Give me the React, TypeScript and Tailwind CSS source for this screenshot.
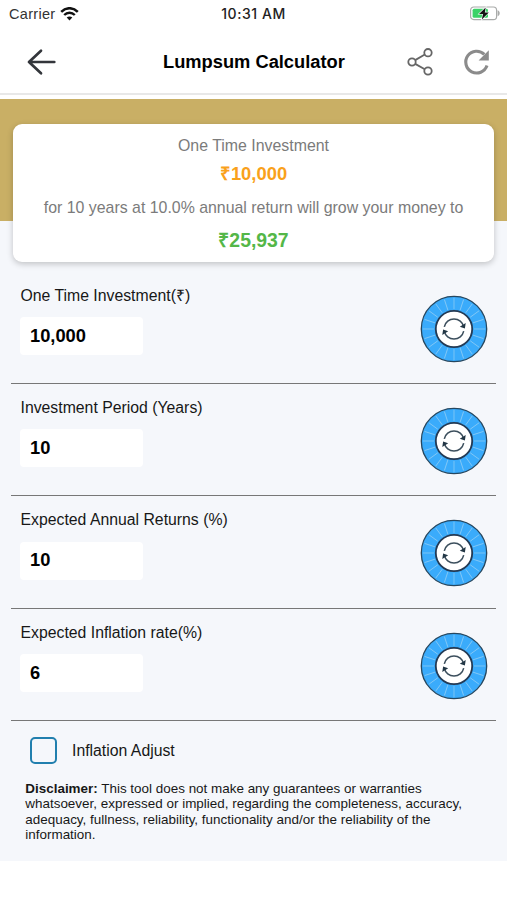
import React from "react";

const fields = [
  { label: "One Time Investment(₹)", value: "10,000" },
  { label: "Investment Period (Years)", value: "10" },
  { label: "Expected Annual Returns (%)", value: "10" },
  { label: "Expected Inflation rate(%)", value: "6" },
];

function WifiIcon() {
  return (
    <svg className="ml-[5px] h-[15px] w-[19px]" viewBox="0 0 19 15" fill="none" stroke="#111">
      <path d="M1.2 4.8C6 0 13 0 17.8 4.8" strokeWidth="2.5" />
      <path d="M4.2 8c3-3 7.6-3 10.6 0" strokeWidth="2.4" />
      <path d="M9.5 13.4 6.7 10.6c1.6-1.4 4-1.4 5.6 0Z" fill="#111" stroke="none" />
    </svg>
  );
}

function BatteryIcon() {
  return (
    <svg className="h-[16px] w-[32px]" viewBox="0 0 32 16" fill="none">
      <rect x="1.6" y="1" width="26" height="12.6" rx="3.2" stroke="#a9abaa" strokeWidth="1.2" />
      <path d="M28.6 4.3c2.8 1.2 2.8 4.8 0 6Z" fill="#a9abaa" />
      <rect x="3.6" y="2.8" width="15.4" height="9" rx="1.5" fill="#3bd267" />
      <path d="M16.7 1.400 10 8h4l-1.200 5.400 7-7h-4Z" fill="#111" stroke="#fff" strokeWidth="1.2" paintOrder="stroke" />
    </svg>
  );
}

function BackIcon() {
  return (
    <svg className="h-[28px] w-[30px]" viewBox="0 0 30 28" fill="none" stroke="#33363b" strokeWidth="2.7" strokeLinecap="round" strokeLinejoin="round">
      <path d="M28.3 14H3M15 2.7 3 14l12 11.3" />
    </svg>
  );
}

function ShareIcon() {
  return (
    <svg className="h-[28px] w-[26px]" viewBox="0 0 26 28" fill="none" stroke="#666" strokeWidth="1.8">
      <circle cx="5" cy="14" r="3.7" />
      <circle cx="21" cy="4.7" r="3.7" />
      <circle cx="21" cy="23" r="3.7" />
      <path d="m8.2 12.1 9.6-5.6M8.2 15.9l9.6 5.3" />
    </svg>
  );
}

function ReloadIcon() {
  return (
    <svg className="h-[28px] w-[28px]" viewBox="0 0 28 28" fill="none">
      <path d="M25 17.6A10.9 10.9 0 1 1 22.3 6.3" stroke="#8b8b8b" strokeWidth="3.1" />
      <path d="M26.8 2.2v10.2H16.6Z" fill="#8b8b8b" />
    </svg>
  );
}

function Dial() {
  return (
    <svg className="h-[68px] w-[68px]" viewBox="0 0 68 68" fill="none">
      <circle cx="34" cy="34" r="32.7" fill="#3aabfb" stroke="#26475f" strokeWidth="1.3" />
      <g stroke="#8bcbf5" strokeWidth=".8">
        {Array.from({ length: 20 }, (_, i) => (
          <path key={i} d="M34 3v11" transform={`rotate(${i * 18} 34 34)`} />
        ))}
      </g>
      <circle cx="34" cy="34" r="18.2" fill="#fff" stroke="#233a55" strokeWidth="1.8" />
      <g stroke="#3c4f5d" strokeWidth="1.5">
        <path d="M24.3 31.8A9.9 9.9 0 0 1 43.7 31.8" />
        <path d="M43.7 36.2A9.9 9.9 0 0 1 24.3 36.2" />
      </g>
      <path d="m39.8 31.8 5.1 1.6.8-5.4ZM28.2 36.2l-5.1-1.6-.8 5.4Z" fill="#233746" />
    </svg>
  );
}

export default function App() {
  return (
    <div className="h-[900px] w-[507px] overflow-hidden bg-white font-['Liberation_Sans',Arial,sans-serif] text-[#171717]">
      <div className="grid h-[28px] grid-cols-3 items-center">
        <div className="flex items-center pl-[9px] text-[14.5px] tracking-[0.3px] text-[#333]">
          <span className="pt-px">Carrier</span>
          <WifiIcon />
        </div>
        <div className="text-center font-['Inter','Liberation_Sans',sans-serif] text-[14px] leading-[18px] font-medium tracking-[0.55px] text-[#222]">10:31 AM</div>
        <div className="flex justify-end pr-[6px]"><BatteryIcon /></div>
      </div>
      <header className="flex h-[67px] items-center border-b-2 border-[#e8e8e8] pt-[2px]">
        <div className="flex w-[163px] pl-[26px]"><BackIcon /></div>
        <h1 className="w-[182px] whitespace-nowrap text-[18.3px] font-bold text-black">Lumpsum Calculator</h1>
        <div className="flex flex-1 items-center justify-end gap-[29px] pr-[17px]">
          <ShareIcon />
          <ReloadIcon />
        </div>
      </header>
      <main className="mt-[3.5px] h-[762.5px] bg-[#f5f7fb]">
        <section className="h-[122.5px] bg-[#c9af65] px-[13px] pt-[25.5px]">
          <div className="flex h-[138px] flex-col items-center rounded-[9px] bg-white pt-[11px] whitespace-nowrap shadow-[0_2px_6px_rgba(0,0,0,0.22)]">
            <p className="h-[24px] text-[15.9px] leading-[22px] text-[#7b7b7b]">One Time Investment</p>
            <p className="h-[38px] text-[18.4px] leading-[30px] font-bold text-[#f9a11b]">₹10,000</p>
            <p className="h-[31px] text-[15.9px] leading-[22px] text-[#7b7b7b]">for 10 years at 10.0% annual return will grow your money to</p>
            <p className="text-[19.4px] leading-[24px] font-bold text-[#54b748]">₹25,937</p>
          </div>
        </section>
        <div className="mx-[11px] pt-[50.7px]">
          {fields.map((field) => (
            <div key={field.label} className="flex h-[112.4px] justify-between border-b border-[#777] pt-[13px] pr-[8px] pl-[9px]">
              <div>
                <label className="block h-[32.1px] pt-px pl-[0.5px] text-[15.8px] leading-[20px] whitespace-nowrap">{field.label}</label>
                <div className="flex h-[38px] w-[123px] items-center rounded-[4px] bg-white pb-px pl-[10px] text-[18.3px] font-bold text-black">{field.value}</div>
              </div>
              <div className="pt-[9.9px]"><Dial /></div>
            </div>
          ))}
        </div>
        <div className="flex h-[58.5px] items-center pl-[30px]">
          <span className="h-[27px] w-[27px] rounded-[5px] border-2 border-[#217fae]" />
          <span className="pl-[15px] text-[15.8px]">Inflation Adjust</span>
        </div>
        <p className="pt-[1px] pl-[25.3px] text-[13.45px] leading-[15.5px] whitespace-nowrap">
          <strong>Disclaimer:</strong> This tool does not make any guarantees or warranties<br />
          whatsoever, expressed or implied, regarding the completeness, accuracy,<br />
          adequacy, fullness, reliability, functionality and/or the reliability of the<br />
          information.
        </p>
      </main>
    </div>
  );
}
